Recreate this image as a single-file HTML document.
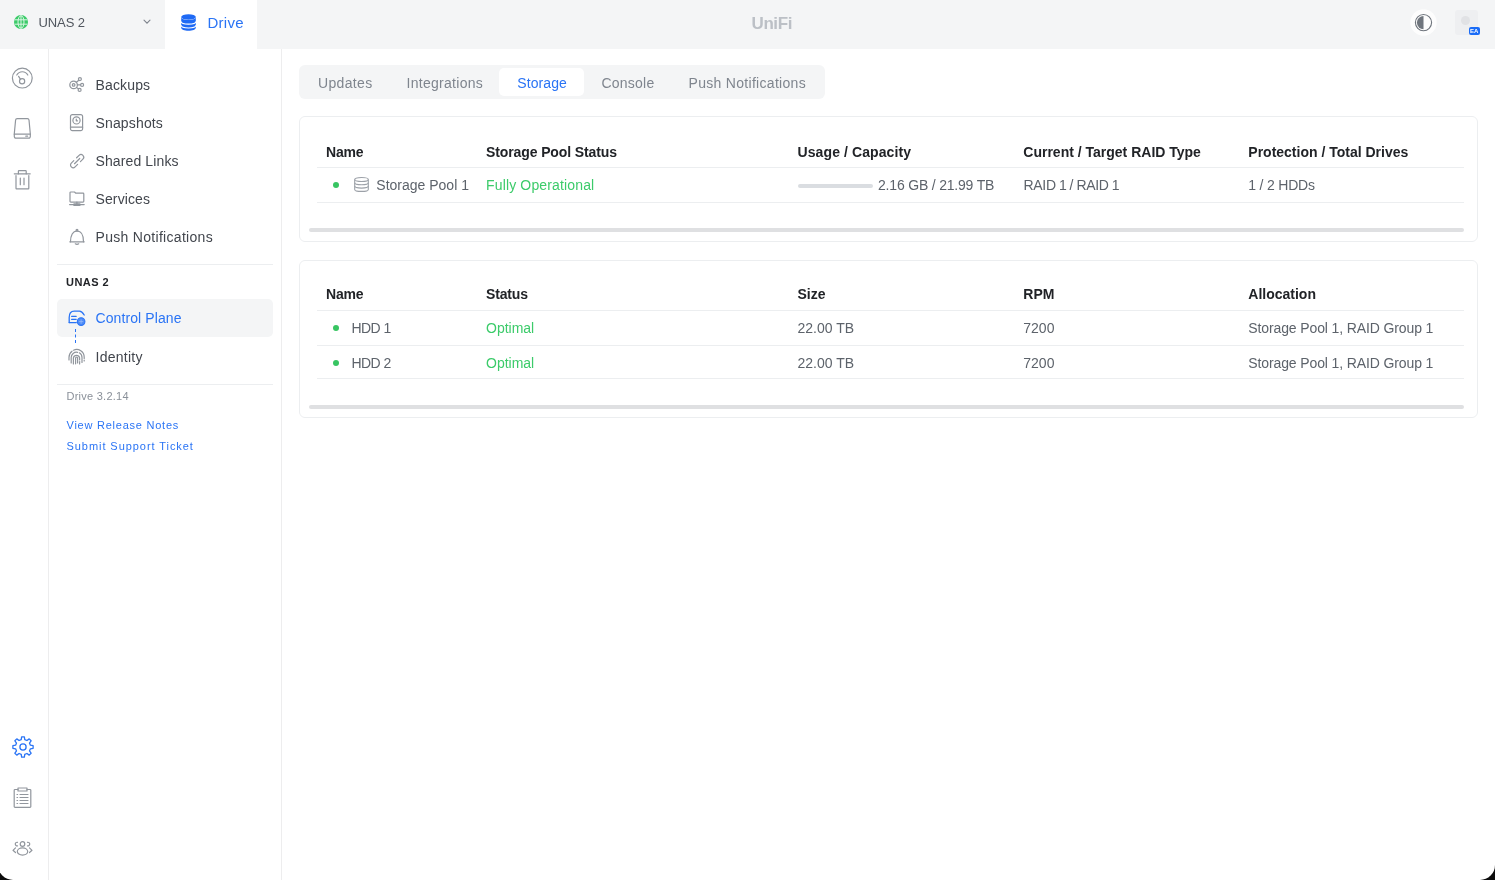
<!DOCTYPE html>
<html><head><meta charset="utf-8">
<style>
*{box-sizing:border-box;margin:0;padding:0}
html,body{width:1495px;height:880px;overflow:hidden;background:#0c0c0c}
body{font-family:"Liberation Sans",sans-serif;color:#50565e;position:relative}
#win{position:absolute;left:0;top:0;width:1495px;height:880px;background:#fff;overflow:hidden;will-change:transform}
#bg{position:absolute;left:-2px;top:-20px;width:1496.5px;height:900px;background:#fff;border-radius:0 0 15px 15px}
svg{position:absolute;overflow:visible}
#hdr{position:absolute;left:0;top:0;width:1495px;height:49px;background:#f4f5f6}
#drv{position:absolute;left:165px;top:0;width:92px;height:49px;background:#fff}
.t{position:absolute;white-space:nowrap;line-height:1}
#rail{position:absolute;left:0;top:49px;width:49px;height:831px;border-right:1px solid #ededee}
#side{position:absolute;left:49px;top:49px;width:233px;height:831px;border-right:1px solid #ededee}
.nav{font-size:14px;color:#42464d}
.tabs{position:absolute;left:299px;top:65.3px;width:526px;height:33.5px;background:#f4f5f6;border-radius:6px}
.seltab{position:absolute;left:499px;top:67.8px;width:84.8px;height:28.5px;background:#fff;border-radius:5px}
.tab{font-size:14px;color:#7f858e}
.card{position:absolute;left:299px;width:1179px;border:1px solid #eceef0;border-radius:6px}
.th{font-size:14px;font-weight:bold;color:#212327}
.td{font-size:14px;color:#5d636b}
.ok{color:#3ccb6a}
.hl{position:absolute;left:317px;width:1147px;height:1px;background:#eceef0}
.sb{position:absolute;left:309px;width:1155px;height:4px;background:#dfe0e2;border-radius:2px}
.dot{position:absolute;width:6px;height:6px;border-radius:50%;background:#38c562}
.blue{color:#2a74f5}
.gi{stroke:#91969d;fill:none;stroke-width:1.2;stroke-linecap:round;stroke-linejoin:round}
</style></head><body>
<div id="bg"></div>
<div id="win" style="background:transparent">
<div id="hdr">
  <div id="drv"></div>
  <!-- globe -->
  <svg style="left:14.4px;top:15.2px" width="14" height="14" viewBox="0 0 14 14">
    <circle cx="7" cy="7" r="7" fill="#3ccb6a"/>
    <g stroke="#e9f9ee" stroke-width="0.9" fill="none">
      <ellipse cx="7" cy="7" rx="3" ry="6.3"/>
      <line x1="0.8" y1="4.8" x2="13.2" y2="4.8"/>
      <line x1="0.8" y1="9.2" x2="13.2" y2="9.2"/>
      <line x1="7" y1="0.7" x2="7" y2="13.3"/>
    </g>
  </svg>
  <div class="t" style="left:38.5px;top:16px;font-size:13px;color:#50565e;letter-spacing:-0.1px">UNAS 2</div>
  <svg style="left:143px;top:19px" width="8" height="6" viewBox="0 0 8 6"><path d="M1 1.2 L4 4.2 L7 1.2" stroke="#7f858e" stroke-width="1.1" fill="none" stroke-linecap="round"/></svg>
  <!-- db icon -->
  <svg style="left:181px;top:14px" width="15" height="17" viewBox="0 0 15 17">
    <ellipse cx="7.5" cy="3" rx="7.3" ry="2.8" fill="#1f6af5"/>
    <path d="M0.2 3 V13.8 C0.2 15.5 3.5 16.8 7.5 16.8 C11.5 16.8 14.8 15.5 14.8 13.8 V3 C14.8 4.7 11.5 6 7.5 6 C3.5 6 0.2 4.7 0.2 3Z" fill="#1f6af5"/>
    <path d="M0.2 7.4 C0.2 9 3.5 10.1 7.5 10.1 C11.5 10.1 14.8 9 14.8 7.4" stroke="#fff" stroke-width="1.1" fill="none"/>
    <path d="M0.2 11.3 C0.2 12.9 3.5 14 7.5 14 C11.5 14 14.8 12.9 14.8 11.3" stroke="#fff" stroke-width="1.1" fill="none"/>
  </svg>
  <div class="t blue" style="left:207.5px;top:14.8px;font-size:15px;letter-spacing:0.25px">Drive</div>
  <div class="t" style="left:751.5px;top:14.5px;font-size:17px;font-weight:bold;color:#bcc0c6;letter-spacing:-0.4px">UniFi</div>
  <!-- theme toggle -->
  <svg style="left:1410px;top:9px" width="27" height="27" viewBox="0 0 27 27">
    <circle cx="13.5" cy="13.5" r="13.2" fill="#fdfdfd"/>
    <circle cx="13.5" cy="13.6" r="8.1" stroke="#6f757d" stroke-width="1.1" fill="none"/>
    <path d="M13.5 7 A6.6 6.6 0 0 0 13.5 20.2 Z" fill="#6f757d"/>
  </svg>
  <!-- avatar -->
  <div style="position:absolute;left:1454.5px;top:10px;width:23.5px;height:24.5px;background:#eeeff1;border-radius:3px"></div>
  <div style="position:absolute;left:1460.5px;top:15.7px;width:9px;height:9px;background:#e1e2e5;border-radius:50%"></div>
  <div style="position:absolute;left:1468.5px;top:26.5px;width:11.5px;height:8px;background:#1a6cf7;border-radius:2px;color:#fff;font-size:6px;font-weight:bold;line-height:8px;text-align:center">EA</div>
</div>

<div id="rail"></div>
<div id="side"></div>

<!-- rail icons -->
<svg class="gi" style="left:12px;top:68px" width="21" height="21" viewBox="0 0 21 21">
  <circle cx="10.3" cy="10.1" r="9.9"/>
  <circle cx="10.1" cy="13.3" r="2.6"/>
  <path d="M6.6 8.3 L8.6 11.3"/>
  <path d="M4.8 7 A6.3 6.3 0 0 1 15.8 7"/>
</svg>
<svg class="gi" style="left:14px;top:118px" width="17" height="22" viewBox="0 0 17 22">
  <path d="M3.2 0.6 H13.4 A1.6 1.6 0 0 1 15 2 L16.3 15.8 V18.6 A1.6 1.6 0 0 1 14.7 20.2 H1.9 A1.6 1.6 0 0 1 0.3 18.6 V15.8 L1.6 2 A1.6 1.6 0 0 1 3.2 0.6Z"/>
  <path d="M0.3 16.2 H16.3"/>
  <path d="M11.8 18.2 H13.6"/>
</svg>
<svg class="gi" style="left:14px;top:170px" width="17" height="20" viewBox="0 0 17 20">
  <path d="M0.3 3.8 H16.2"/>
  <path d="M4.4 3.8 V1.2 A0.6 0.6 0 0 1 5 0.6 H11.6 A0.6 0.6 0 0 1 12.2 1.2 V3.8"/>
  <path d="M2 5.6 V18.3 A0.6 0.6 0 0 0 2.6 18.9 H14.2 A0.6 0.6 0 0 0 14.8 18.3 V5.6"/>
  <path d="M6.3 8 V14.7"/><path d="M10 8 V14.7"/>
</svg>
<svg style="left:11.5px;top:735.8px" width="22" height="22" viewBox="0 0 22 22" fill="none" stroke="#2a74f5" stroke-width="1.3" stroke-linejoin="round">
  <path d="M9.23 3.61 L9.64 0.89 L12.36 0.89 L12.77 3.61 L14.97 4.52 L17.19 2.89 L19.11 4.81 L17.48 7.03 L18.39 9.23 L21.11 9.64 L21.11 12.36 L18.39 12.77 L17.48 14.97 L19.11 17.19 L17.19 19.11 L14.97 17.48 L12.77 18.39 L12.36 21.11 L9.64 21.11 L9.23 18.39 L7.03 17.48 L4.81 19.11 L2.89 17.19 L4.52 14.97 L3.61 12.77 L0.89 12.36 L0.89 9.64 L3.61 9.23 L4.52 7.03 L2.89 4.81 L4.81 2.89 L7.03 4.52Z"/>
  <circle cx="11" cy="11" r="3.1"/>
</svg>
<svg class="gi" style="left:13px;top:786.5px" width="19" height="21" viewBox="0 0 19 21">
  <path d="M5 2.5 H2 A0.8 0.8 0 0 0 1.2 3.3 V19.5 A0.8 0.8 0 0 0 2 20.3 H17 A0.8 0.8 0 0 0 17.8 19.5 V3.3 A0.8 0.8 0 0 0 17 2.5 H14"/>
  <path d="M5 1 H14 V4 H5 Z"/>
  <path d="M4 7.5 H4.6"/><path d="M7 7.5 H15"/>
  <path d="M4 10.5 H4.6"/><path d="M7 10.5 H15"/>
  <path d="M4 13.5 H4.6"/><path d="M7 13.5 H15"/>
  <path d="M4 16.5 H4.6"/><path d="M7 16.5 H15"/>
</svg>
<svg class="gi" style="left:12px;top:840.5px" width="21" height="15" viewBox="0 0 21 15">
  <circle cx="10.5" cy="3" r="2.3"/>
  <path d="M5.5 1.3 A1.8 1.8 0 1 0 5.5 4.8"/>
  <path d="M15.5 1.3 A1.8 1.8 0 1 1 15.5 4.8"/>
  <ellipse cx="10.5" cy="10.5" rx="5.2" ry="3.6"/>
  <path d="M3.5 6.8 L1 9.3 L3.5 11.5"/>
  <path d="M17.5 6.8 L20 9.3 L17.5 11.5"/>
</svg>

<!-- sidebar nav -->
<svg class="gi" style="left:68.5px;top:77px" width="16" height="16" viewBox="0 0 16 16">
  <circle cx="4.6" cy="7.9" r="3.8"/>
  <circle cx="4.6" cy="7.9" r="1.3"/>
  <circle cx="10.9" cy="2.1" r="1.5"/>
  <circle cx="13.1" cy="7.9" r="1.5"/>
  <circle cx="10.6" cy="12.9" r="1.5"/>
  <path d="M8.4 7.9 H11.6"/><path d="M7.4 5.3 L9.8 3.2"/><path d="M7.4 10.5 L9.5 11.8"/>
</svg>
<div class="t nav" style="left:95.5px;top:78px;letter-spacing:0.15px">Backups</div>

<svg class="gi" style="left:69.5px;top:114px" width="14" height="17" viewBox="0 0 14 17">
  <path d="M2.3 0.6 H10.8 A1.8 1.8 0 0 1 12.6 2.4 V14.8 A1.8 1.8 0 0 1 10.8 16.6 H2.3 A1.8 1.8 0 0 1 0.5 14.8 V2.4 A1.8 1.8 0 0 1 2.3 0.6Z"/>
  <circle cx="6.5" cy="6.4" r="3.6"/>
  <path d="M6.3 5 V6.8 H7.5"/>
  <path d="M0.5 13.2 H12.6"/>
</svg>
<div class="t nav" style="left:95.5px;top:116px;letter-spacing:0.15px">Snapshots</div>

<svg class="gi" style="left:68.5px;top:152.5px" width="16" height="16" viewBox="0 0 16 16">
  <g transform="translate(8.1 8.1) rotate(-45) translate(-8.3 0)">
  <path d="M6.3 -2.7 H2.8 A2.7 2.7 0 0 0 2.8 2.7 H6.3"/>
  <path d="M10.3 -2.7 H13.8 A2.7 2.7 0 0 1 13.8 2.7 H10.3"/>
  <path d="M4.6 0 H12"/>
  </g>
</svg>
<div class="t nav" style="left:95.5px;top:154px;letter-spacing:0.12px">Shared Links</div>

<svg class="gi" style="left:68.5px;top:190.5px" width="16" height="16" viewBox="0 0 16 16">
  <path d="M1 1.8 A0.8 0.8 0 0 1 1.8 1 H5.5 L6.8 2.2 H14 A0.8 0.8 0 0 1 14.8 3 V10.3 A0.8 0.8 0 0 1 14 11.1 H1.8 A0.8 0.8 0 0 1 1 10.3 Z"/>
  <path d="M7.9 11.1 V12.8"/>
  <path d="M0.6 13.6 H15.2"/>
  <path d="M4.5 13.6 A1 1 0 0 1 5.5 12.8 H10.3 A1 1 0 0 1 11.3 13.6 A1 1 0 0 1 10.3 14.4 H5.5 A1 1 0 0 1 4.5 13.6Z"/>
</svg>
<div class="t nav" style="left:95.5px;top:192px;letter-spacing:0.12px">Services</div>

<svg class="gi" style="left:68.5px;top:227.5px" width="16" height="17" viewBox="0 0 16 17">
  <path d="M1.5 13.8 C1.5 7.5 3.8 3 8 3 C12.2 3 14.5 7.5 14.5 13.8"/>
  <path d="M0.8 13.8 H15.2"/>
  <circle cx="8" cy="2.2" r="0.9"/>
  <path d="M6.3 15.8 Q8 16.9 9.7 15.8"/>
</svg>
<div class="t nav" style="left:95.5px;top:230px;letter-spacing:0.3px">Push Notifications</div>

<div style="position:absolute;left:57px;top:264px;width:216px;height:1px;background:#eceef0"></div>
<div class="t" style="left:66px;top:277px;font-size:11px;font-weight:bold;color:#212327;letter-spacing:0.45px">UNAS 2</div>

<div style="position:absolute;left:57px;top:299px;width:215.5px;height:37.5px;background:#f4f5f6;border-radius:5px"></div>
<svg style="left:67.5px;top:310px" width="18" height="16" viewBox="0 0 18 16" fill="none" stroke="#2a74f5" stroke-width="1.3" stroke-linecap="round" stroke-linejoin="round">
  <path d="M1.2 12.6 V7.5 Q1.2 1.1 6.2 1.1 H11.5 Q13.8 1.1 16.2 5"/>
  <path d="M1.2 12.6 H8.3"/>
  <path d="M3.6 6.3 H8.2"/>
  <path d="M3.6 9.3 H8.2"/>
  <circle cx="13.1" cy="11.6" r="3.8" fill="#4f8cf7" stroke="#2a74f5" stroke-width="1.1"/>
  <path d="M11.3 11.6 H14.9 M13.1 9.8 V13.4" stroke="#9fc0fb" stroke-width="0.7"/>
</svg>
<div class="t blue" style="left:95.5px;top:311px;font-size:14px;letter-spacing:0.1px">Control Plane</div>
<div style="position:absolute;left:75px;top:328.5px;width:0;height:14px;border-left:1.2px dashed #2a74f5"></div>

<svg class="gi" style="left:67.5px;top:347.5px" width="18" height="17" viewBox="0 0 18 17" style="stroke-width:1.05">
  <path d="M1 12 V9.3 A7.6 7.6 0 0 1 4 3.2"/>
  <path d="M5.5 2.2 A7.6 7.6 0 0 1 16.2 9.3 V10.5"/>
  <path d="M16.2 12.2 V13"/>
  <path d="M3.2 15 V9.6 A5.4 5.4 0 0 1 9.5 4.3"/>
  <path d="M11.3 4.8 A5.4 5.4 0 0 1 14 9.6 V14.5"/>
  <path d="M5.4 16 V9.8 A3.2 3.2 0 0 1 11.6 9.8 V12"/>
  <path d="M11.6 13.5 V16"/>
  <path d="M7.6 15.8 V10 A1 1 0 0 1 9.6 10 V15"/>
</svg>
<div class="t nav" style="left:95.5px;top:350px;letter-spacing:0.27px">Identity</div>

<div style="position:absolute;left:57px;top:384px;width:216px;height:1px;background:#eceef0"></div>
<div class="t" style="left:66.5px;top:391px;font-size:11px;color:#8a9099;letter-spacing:0.25px">Drive 3.2.14</div>
<div class="t blue" style="left:66.5px;top:420px;font-size:11px;letter-spacing:0.76px">View Release Notes</div>
<div class="t blue" style="left:66.5px;top:441px;font-size:11px;letter-spacing:0.94px">Submit Support Ticket</div>

<!-- tabs -->
<div class="tabs"></div>
<div class="seltab"></div>
<div class="t tab" style="left:318px;top:76px;letter-spacing:0.34px">Updates</div>
<div class="t tab" style="left:406.5px;top:76px;letter-spacing:0.29px">Integrations</div>
<div class="t tab blue" style="left:517.3px;top:76px;letter-spacing:0.09px">Storage</div>
<div class="t tab" style="left:601.4px;top:76px;letter-spacing:0.24px">Console</div>
<div class="t tab" style="left:688.5px;top:76px;letter-spacing:0.3px">Push Notifications</div>

<!-- card 1 -->
<div class="card" style="top:116px;height:125.5px"></div>
<div class="t th" style="left:326px;top:145px;letter-spacing:-0.18px">Name</div>
<div class="t th" style="left:486px;top:145px;letter-spacing:-0.11px">Storage Pool Status</div>
<div class="t th" style="left:797.5px;top:145px;letter-spacing:0.1px">Usage / Capacity</div>
<div class="t th" style="left:1023.3px;top:145px">Current / Target RAID Type</div>
<div class="t th" style="left:1248.3px;top:145px">Protection / Total Drives</div>
<div class="hl" style="top:166.8px"></div>
<div class="dot" style="left:333px;top:182px"></div>
<svg style="left:353.5px;top:177.3px" width="16" height="16" viewBox="0 0 16 16" fill="none" stroke="#9ca1a8" stroke-width="1.1">
  <ellipse cx="7.5" cy="2.5" rx="6.8" ry="2"/>
  <path d="M0.7 2.5 V12.4 C0.7 13.5 3.7 14.4 7.5 14.4 C11.3 14.4 14.3 13.5 14.3 12.4 V2.5"/>
  <path d="M0.7 5.8 C0.7 6.9 3.7 7.8 7.5 7.8 C11.3 7.8 14.3 6.9 14.3 5.8"/>
  <path d="M0.7 9.1 C0.7 10.2 3.7 11.1 7.5 11.1 C11.3 11.1 14.3 10.2 14.3 9.1"/>
</svg>
<div class="t td" style="left:376.3px;top:178.4px">Storage Pool 1</div>
<div class="t td ok" style="left:486px;top:178.4px;letter-spacing:0.15px">Fully Operational</div>
<div style="position:absolute;left:797.5px;top:183.5px;width:75px;height:4px;background:#dadde1;border-radius:2px"></div>
<div class="t td" style="left:878px;top:178.4px;letter-spacing:-0.19px">2.16 GB / 21.99 TB</div>
<div class="t td" style="left:1023.5px;top:178.4px;letter-spacing:-0.3px;word-spacing:-0.4px">RAID 1 / RAID 1</div>
<div class="t td" style="left:1248.3px;top:178.4px;letter-spacing:-0.2px">1 / 2 HDDs</div>
<div class="hl" style="top:202px"></div>
<div class="sb" style="top:228.3px"></div>

<!-- card 2 -->
<div class="card" style="top:259.5px;height:158.5px"></div>
<div class="t th" style="left:326px;top:286.7px;letter-spacing:-0.18px">Name</div>
<div class="t th" style="left:486px;top:286.7px;letter-spacing:-0.16px">Status</div>
<div class="t th" style="left:797.5px;top:286.7px">Size</div>
<div class="t th" style="left:1023.3px;top:286.7px">RPM</div>
<div class="t th" style="left:1248.3px;top:286.7px">Allocation</div>
<div class="hl" style="top:310px"></div>
<div class="dot" style="left:333px;top:324.5px"></div>
<div class="t td" style="left:351.5px;top:320.6px;letter-spacing:-0.55px">HDD 1</div>
<div class="t td ok" style="left:486px;top:320.6px">Optimal</div>
<div class="t td" style="left:797.5px;top:320.6px">22.00 TB</div>
<div class="t td" style="left:1023.3px;top:320.6px">7200</div>
<div class="t td" style="left:1248.3px;top:320.6px;letter-spacing:-0.12px">Storage Pool 1, RAID Group 1</div>
<div class="hl" style="top:345px"></div>
<div class="dot" style="left:333px;top:359.5px"></div>
<div class="t td" style="left:351.5px;top:355.6px;letter-spacing:-0.55px">HDD 2</div>
<div class="t td ok" style="left:486px;top:355.6px">Optimal</div>
<div class="t td" style="left:797.5px;top:355.6px">22.00 TB</div>
<div class="t td" style="left:1023.3px;top:355.6px">7200</div>
<div class="t td" style="left:1248.3px;top:355.6px;letter-spacing:-0.12px">Storage Pool 1, RAID Group 1</div>
<div class="hl" style="top:378px"></div>
<div class="sb" style="top:405px"></div>
</div>
</body></html>
